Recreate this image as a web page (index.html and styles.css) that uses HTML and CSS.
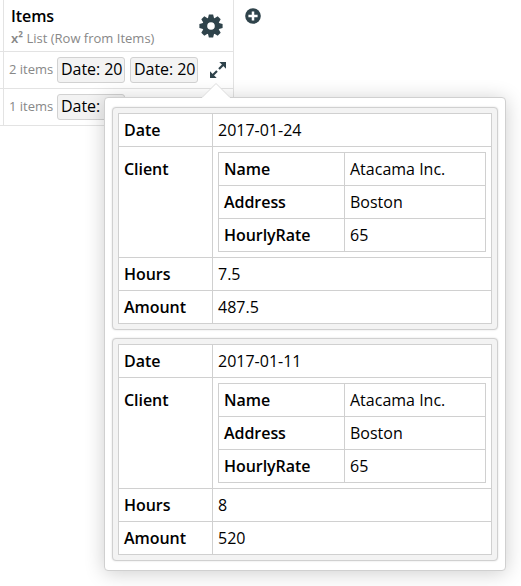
FILE: index.html
```html
<!DOCTYPE html>
<html lang="en">
<head>
<meta charset="utf-8">
<title>Items</title>
<link rel="stylesheet" href="styles.css">
</head>
<body>
<main class="page">
  <div class="sheet">
    <div class="gutter"><span></span><span></span><span></span></div>
    <section class="column">
      <header class="head">
        <div>
          <h1 class="title">Items</h1>
          <p class="type"><b>x²</b> List (Row from Items)</p>
        </div>
        <svg class="gear" viewBox="-12 -12 24 24" width="24" height="24">
          <g fill="#2f434b">
            <circle r="8.6"/>
            <path id="tooth" d="M-3 -8L-2.1 -11.6H2.1L3 -8V8L2.1 11.6H-2.1L-3 8Z"/>
            <use href="#tooth" transform="rotate(45)"/>
            <use href="#tooth" transform="rotate(90)"/>
            <use href="#tooth" transform="rotate(135)"/>
          </g>
          <circle r="3.8" fill="#fff"/>
        </svg>
      </header>
      <div class="line">
        <span class="count">2 items</span>
        <span class="chip">Date: 20</span>
        <span class="chip">Date: 20</span>
        <svg class="expand" viewBox="0 0 16 16" width="16" height="16" fill="#2f434b" stroke="#2f434b">
          <path stroke="none" d="M9.3 0H16V6.7ZM0 9.3V16H6.7Z"/>
          <path stroke-width="2.2" d="M13.5 2.5L9 7M7 9L2.5 13.5"/>
        </svg>
      </div>
      <div class="line">
        <span class="count">1 items</span>
        <span class="chip">Date: 20</span>
      </div>
    </section>
    <svg class="add" viewBox="0 0 16 16" width="16" height="16">
      <circle cx="8" cy="8" r="7.8" fill="#2f434b"/>
      <path d="M8 3.4V12.6M3.4 8H12.6" stroke="#fff" stroke-width="2.5"/>
    </svg>
  </div>

  <div class="popup">
    <svg class="arrow" viewBox="0 0 28 15" width="28" height="15">
      <path d="M0 15V14.5L14 .5L28 14.5V15Z" fill="#fff"/>
      <path d="M0 14.5L14 .5L28 14.5" fill="none" stroke="#dcdcdc"/>
    </svg>
    <div class="card">
      <div class="table">
        <div class="key">Date</div><div>2017-01-24</div>
        <div class="key tall">Client</div>
        <div class="nest">
          <div class="table inner">
            <div class="key">Name</div><div>Atacama Inc.</div>
            <div class="key">Address</div><div>Boston</div>
            <div class="key">HourlyRate</div><div>65</div>
          </div>
        </div>
        <div class="key">Hours</div><div>7.5</div>
        <div class="key">Amount</div><div>487.5</div>
      </div>
    </div>
    <div class="card">
      <div class="table">
        <div class="key">Date</div><div>2017-01-11</div>
        <div class="key tall">Client</div>
        <div class="nest">
          <div class="table inner">
            <div class="key">Name</div><div>Atacama Inc.</div>
            <div class="key">Address</div><div>Boston</div>
            <div class="key">HourlyRate</div><div>65</div>
          </div>
        </div>
        <div class="key">Hours</div><div>8</div>
        <div class="key">Amount</div><div>520</div>
      </div>
    </div>
  </div>
</main>
</body>
</html>
```

FILE: styles.css
```css
* { box-sizing: border-box; }
body {
  margin: 0;
  background: #fff;
  color: #000;
  font: 16px/22px "Open Sans", sans-serif;
}
.page { position: relative; height: 586px; overflow: hidden; }
.sheet { display: flex; align-items: flex-start; }
.gutter { width: 3px; }
.gutter span { display: block; height: 37px; border-bottom: 1px solid #e3e3e3; }
.gutter span:first-child { height: 52px; }
.column {
  width: 231px;
  border-left: 1px solid #e3e3e3;
  border-right: 1px solid #e3e3e3;
}
.head {
  display: flex;
  justify-content: space-between;
  height: 52px;
  padding: 5px 10px 0 7px;
  border-bottom: 1px solid #e3e3e3;
}
.title { margin: 0; font-size: 16px; line-height: 22px; font-weight: 600; letter-spacing: -.1px; }
.type { margin: 2px 0 0; font-size: 13px; line-height: 18px; color: #888; }
.type b { font-family: "Noto Sans", sans-serif; font-weight: 600; }
.gear { margin-top: 9px; }
.line {
  display: flex;
  align-items: center;
  height: 37px;
  padding-left: 5px;
  border-bottom: 1px solid #e3e3e3;
}
.count { width: 48px; padding-bottom: 2px; font-size: 13px; color: #888; white-space: nowrap; }
.chip {
  width: 68px;
  height: 26px;
  margin-right: 5px;
  padding-left: 3px;
  border: 1px solid #d2d2d2;
  border-radius: 3px;
  background: #f3f3f3;
  line-height: 23px;
  letter-spacing: -.05px;
  white-space: nowrap;
  overflow: hidden;
}
.expand { margin-left: 7px; }
.add { margin: 8px 0 0 11px; }

.popup {
  position: absolute;
  left: 104px;
  top: 97px;
  width: 402px;
  display: flex;
  flex-direction: column;
  gap: 8px;
  padding: 9px 7px;
  border: 1px solid #d0d0d0;
  border-radius: 4px;
  background: #fff;
  box-shadow: 0 2px 20px rgba(0, 0, 0, .2);
}
.arrow { position: absolute; left: 97px; top: -15px; }
.card {
  padding: 5px;
  border: 1px solid #d0d0d0;
  border-radius: 4px;
  background: #f3f3f3;
  box-shadow: 0 0 2px rgba(0, 0, 0, .15);
}
.table {
  display: grid;
  grid-template-columns: 94px 1fr;
  border: solid #d0d0d0;
  border-width: 1px 0 0 1px;
  background: #fff;
}
.table > div {
  padding: 5px;
  border: solid #d0d0d0;
  border-width: 0 1px 1px 0;
}
.table .key { font-weight: 600; letter-spacing: -.05px; }
.table .tall { padding-top: 11px; }
.table .inner { grid-template-columns: 126px 1fr; border-width: 1px 0 0 1px; }
```
